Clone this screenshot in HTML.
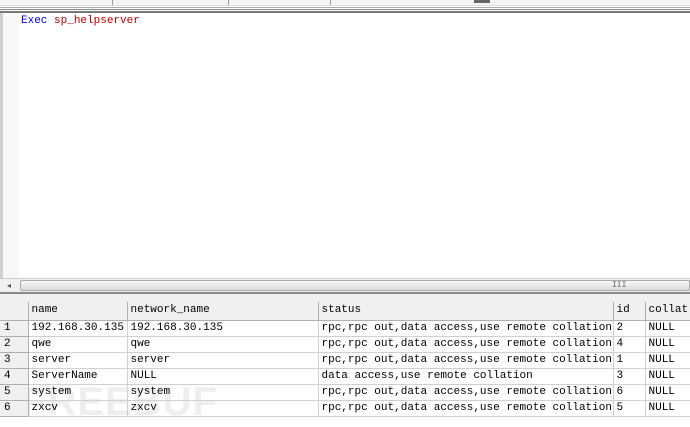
<!DOCTYPE html>
<html><head><style>
body{margin:0;width:690px;height:427px;overflow:hidden;background:#fff;position:relative;font-family:"Liberation Mono","Noto Sans CJK SC",monospace;font-size:11px}
.a{position:absolute}
table{border-collapse:collapse;position:absolute;left:0;top:302px;table-layout:fixed;width:700px}
td{border-right:1px solid #d0d0d0;border-bottom:1px solid #d0d0d0;height:15px;padding:0 0 0 3px;white-space:nowrap;overflow:hidden;line-height:15px;color:#000;box-sizing:border-box}
tr.h td{background:#f0f0f0;border-right:1px solid #b0b0b0;border-bottom:1px solid #b0b0b0;height:18px;line-height:17px}
td.n{background:#f0f0f0;border-right:1px solid #b0b0b0;border-bottom:1px solid #b0b0b0;padding-left:4px}
tr{height:16px}
</style></head><body>
<div class="a" style="left:0;top:0;width:690px;height:5px;background:#f4f4f4;border-bottom:1px solid #ddd"></div>
<div class="a" style="left:112px;top:0;width:1px;height:5px;background:#999"></div>
<div class="a" style="left:228px;top:0;width:1px;height:5px;background:#999"></div>
<div class="a" style="left:330px;top:0;width:1px;height:5px;background:#999"></div>
<div class="a" style="left:474px;top:0;width:16px;height:3px;background:#666"></div>
<div class="a" style="left:0;top:7px;width:690px;height:1px;background:#aaa"></div>
<div class="a" style="left:0;top:9px;width:690px;height:1px;background:#888"></div>
<div class="a" style="left:0;top:11px;width:690px;height:2px;background:#777"></div>
<div class="a" style="left:0;top:13px;width:3px;height:265px;background:#d0d0d0"></div>
<div class="a" style="left:3px;top:13px;width:16px;height:265px;background:#f7f7f7"></div>
<div class="a" style="left:21px;top:14px;line-height:15px"><span style="color:#0000e0">Exec</span> <span style="color:#b00000">sp_helpserver</span></div>
<div class="a" style="left:0;top:278px;width:690px;height:13px;background:#f0f0f0;border-top:1px solid #ccc"></div>
<div class="a" style="left:7px;top:281px;font-size:8px;color:#555">◂</div>
<div class="a" style="left:20px;top:280px;width:668px;height:9px;background:linear-gradient(#f8f8f8,#dcdcdc);border:1px solid #aaa;border-radius:2px"></div>
<div class="a" style="left:612px;top:281px;font-size:8px;color:#666">III</div>
<div class="a" style="left:0;top:292px;width:690px;height:2px;background:#888"></div>
<div class="a" style="left:0;top:294px;width:690px;height:8px;background:#f0f0f0"></div>
<div class="a" style="left:22px;top:382px;font-family:'Liberation Sans',sans-serif;font-weight:bold;font-size:40px;color:rgba(200,200,200,0.3);letter-spacing:1px;line-height:40px">FREEBUF</div>
<table>
<colgroup><col style="width:28px"><col style="width:99px"><col style="width:191px"><col style="width:295px"><col style="width:32px"><col style="width:55px"></colgroup>
<tr class="h"><td></td><td>name</td><td>network_name</td><td>status</td><td>id</td><td>collat</td></tr>
<tr><td class="n">1</td><td>192.168.30.135</td><td>192.168.30.135</td><td>rpc,rpc out,data access,use remote collation</td><td>2</td><td>NULL</td></tr>
<tr><td class="n">2</td><td>qwe</td><td>qwe</td><td>rpc,rpc out,data access,use remote collation</td><td>4</td><td>NULL</td></tr>
<tr><td class="n">3</td><td>server</td><td>server</td><td>rpc,rpc out,data access,use remote collation</td><td>1</td><td>NULL</td></tr>
<tr><td class="n">4</td><td>ServerName</td><td>NULL</td><td>data access,use remote collation</td><td>3</td><td>NULL</td></tr>
<tr><td class="n">5</td><td>system</td><td>system</td><td>rpc,rpc out,data access,use remote collation</td><td>6</td><td>NULL</td></tr>
<tr><td class="n">6</td><td>zxcv</td><td>zxcv</td><td>rpc,rpc out,data access,use remote collation</td><td>5</td><td>NULL</td></tr>
</table>
</body></html>
